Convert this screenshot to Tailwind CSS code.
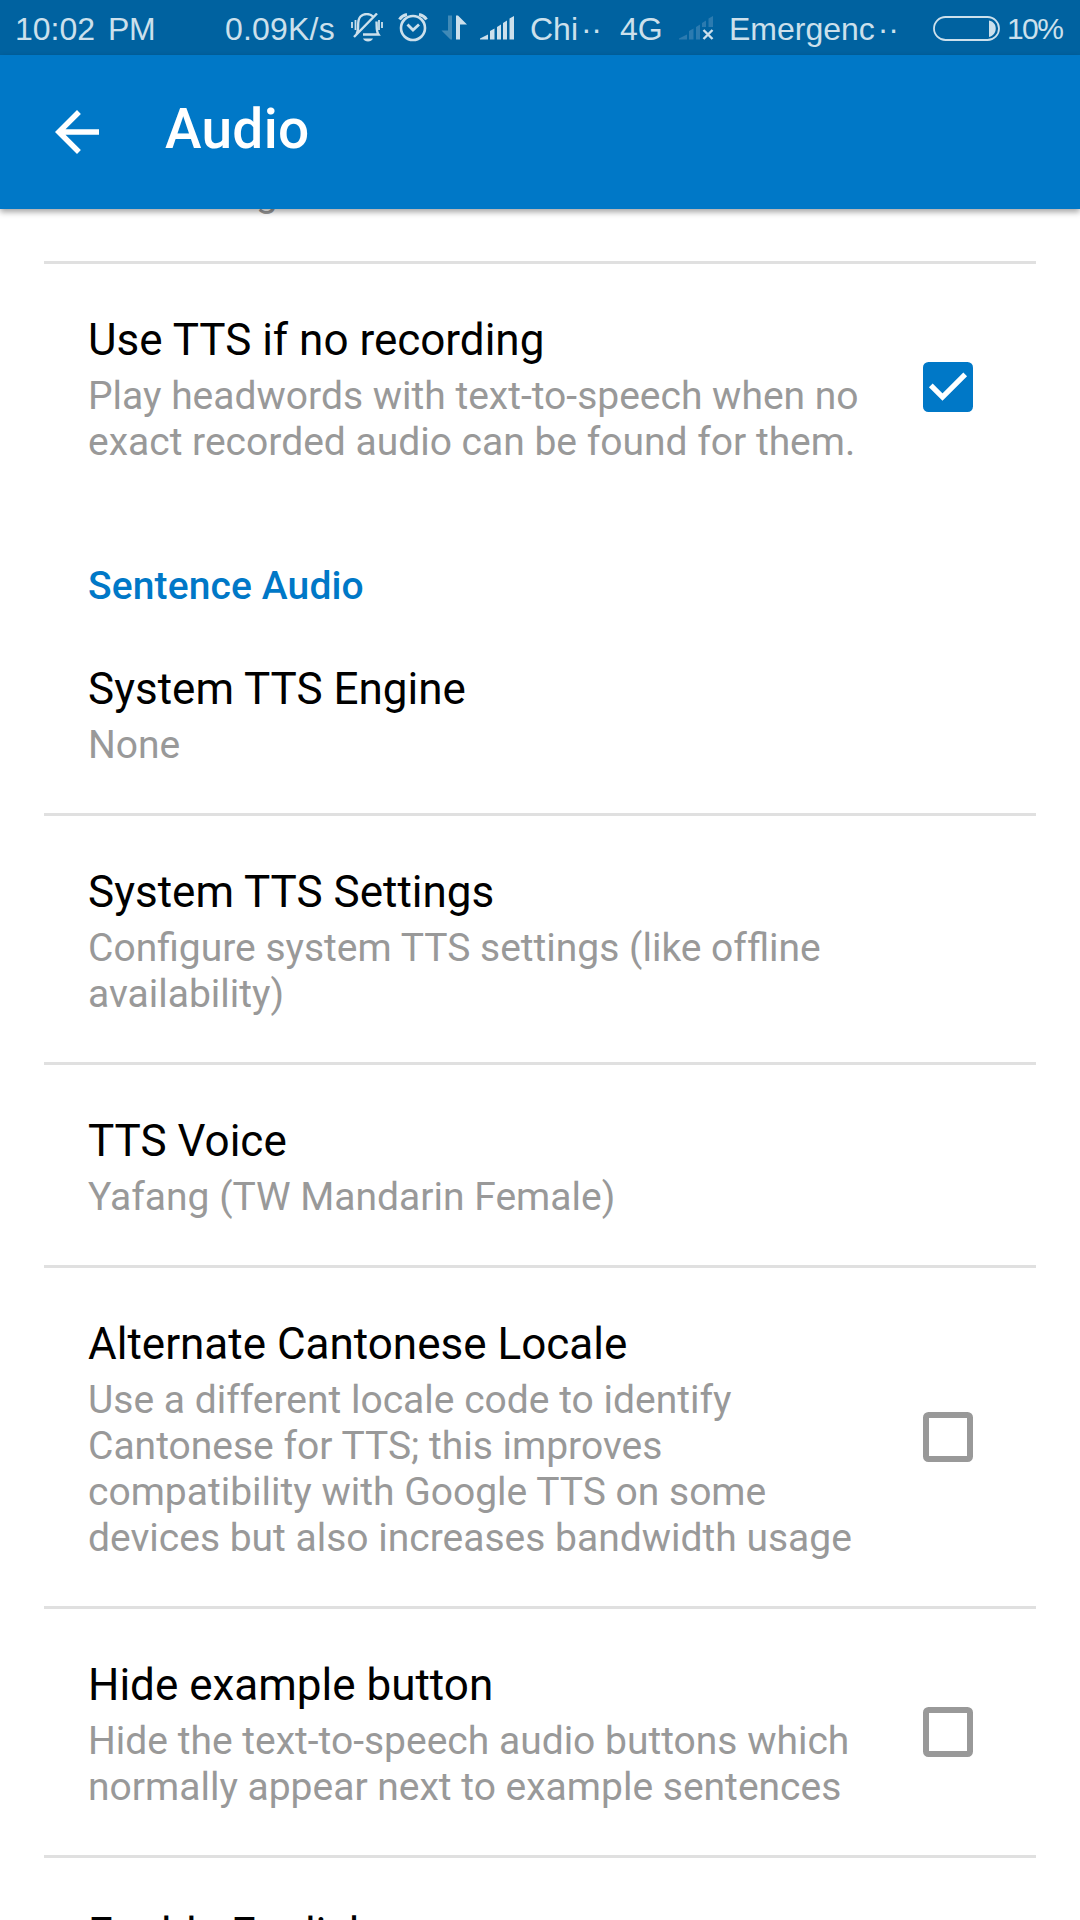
<!DOCTYPE html>
<html lang="en">
  <head>
    <meta charset="UTF-8" />
    <meta name="viewport" content="width=device-width, initial-scale=1.0" />
    <title>Audio</title>
    <script src="https://cdn.jsdelivr.net/npm/@tailwindcss/browser@4"></script>
  </head>
  <body class="bg-white">
    <div class="w-[1080px] h-[1920px] overflow-hidden flex flex-col bg-white font-[Roboto,sans-serif]">
      <!-- Status bar -->
      <div class="h-[55px] shrink-0 flex items-center bg-[#0062a0] text-[#cce0ec] font-['Liberation_Sans',sans-serif] text-[32px] leading-[54px] whitespace-nowrap pt-[3px]">
        <span class="ml-[15px] w-[210px]">10:02<span class="ml-[13px] tracking-[-0.5px]">PM</span></span>
        <span class="w-[125px] tracking-[0.2px]">0.09K/s</span>
        <svg class="w-[34px] h-[32px] shrink-0" viewBox="350 13 34 32" fill="none" stroke="#cce0ec" stroke-width="2.4">
          <path d="M373 16.500C370 13.500 364 13 360.500 16.500C356 21 360 29 356.500 34M376.500 21.500C377 27 376 31 378.500 34.500H363M354 37L377 13.500" />
          <path d="M352 22v6M355.500 20v10M379 20v10M382 22v6" stroke-width="1.800" />
          <path d="M363 38.500h10c-1.500 4-8.500 4-10 0z" fill="#cce0ec" stroke="none" />
        </svg>
        <svg class="ml-[14px] w-[30px] h-[32px] shrink-0" viewBox="398 13 30 32" fill="none" stroke="#cce0ec" stroke-width="2.6">
          <circle cx="413" cy="28" r="12" />
          <path d="M407.500 24.500L413 30L419 24.500" stroke-width="2.8" />
          <path d="M399.500 19.500Q402 15.500 407 14.500M426.500 19.500Q424 15.500 419 14.500" stroke-width="3" />
        </svg>
        <svg class="ml-[13px] w-[27px] h-[28px] shrink-0" viewBox="441 15 27 28">
          <path d="M448 15.500h4V39.500h-1.500L441.500 30.500h6.500z" fill="#408ab7" />
          <path d="M456 39.500V15.500h2L467 24.500h-7v15z" fill="#cce0ec" />
        </svg>
        <svg class="ml-[12px] w-[34px] h-[26px] shrink-0" viewBox="480 16 34 26" fill="#cce0ec">
          <path d="M480 39.500V38.500L488 34.500V39.500zM490 39.500V31l4.500-2.500v11zM497 39.500V27l4-2.500v15zM503 39.500V23l4-2.500v19zM509.500 39.500V18.500l4.500-2.500v23.500z" />
        </svg>
        <span class="ml-[16px] w-[90px]">Chi<span class="ml-[3px] tracking-[-0.3px]">··</span></span>
        <span class="w-[59px]">4G</span>
        <svg class="w-[35px] h-[26px] shrink-0" viewBox="679 16 35 26">
          <path d="M679 39.500V38.500L687 34.500V39.500zM689 39.500V31l4.500-2.500v11zM696 39.500V27l4-2.500v15zM702 27V23l4-2.500v6.500zM708.500 27V18.500l4.500-2.500v11z" fill="#2c7bb0" />
          <path d="M703.500 30l9 9M712.500 30l-9 9" stroke="#cce0ec" stroke-width="2.4" />
        </svg>
        <span class="ml-[15px] w-[204px]">Emergenc<span class="ml-[3px] tracking-[-0.3px]">··</span></span>
        <svg class="w-[67px] h-[26px] shrink-0" viewBox="933 15 67 26">
          <rect x="934" y="16" width="65" height="23" rx="11.500" fill="none" stroke="#cce0ec" stroke-width="1.8" />
          <path d="M989 19.500C998 21 998 34 989 36z" fill="#cce0ec" />
        </svg>
        <span class="ml-[7px] text-[30px] tracking-[-1.6px]">10%</span>
      </div>

      <!-- App bar -->
      <div class="relative z-10 h-[154px] shrink-0 flex items-center bg-[#0078c7] text-white shadow-[0_3px_6px_rgba(0,0,0,0.36)]">
        <svg class="ml-[55px] w-[44px] h-[44px]" viewBox="4 4 16 16" fill="#fff">
          <path d="M20 11H7.830l5.590-5.590L12 4l-8 8 8 8 1.410-1.410L7.830 13H20v-2z" />
        </svg>
        <h1 class="ml-[66px] mb-[6px] text-[55px] leading-[64px] font-medium tracking-[0.3px]">Audio</h1>
      </div>

      <!-- Row scrolled under the app bar -->
      <div class="mx-[44px] h-[55px] shrink-0 flex flex-col justify-end border-b-[3px] border-[#e0e0e0]">
        <p class="mb-[45px] pl-[212px] text-[39px] leading-[46px] text-[#999]">g</p>
      </div>

      <div class="mx-[44px] px-[44px] pt-[50px] pb-[45px] flex items-start shrink-0">
        <div class="w-[835px]">
          <h2 class="text-[44px] leading-[52px] text-black">Use TTS if no recording</h2>
          <p class="mt-[7px] text-[39px] leading-[46px] text-[#999]">Play headwords with text-to-speech when no<br />exact recorded audio can be found for them.</p>
        </div>
        <svg class="mt-[48px] w-[50px] h-[50px] shrink-0" viewBox="0 0 50 50">
          <rect width="50" height="50" rx="5.500" fill="#0078c7" />
          <path d="M7.800 23.300L19.500 35L42.200 12.300" fill="none" stroke="#fff" stroke-width="5.300" />
        </svg>
      </div>

      <h3 class="pl-[88px] pt-[53px] pb-[4px] shrink-0 text-[39px] leading-[46px] font-medium tracking-[0.12px] text-[#0078c7]">Sentence Audio</h3>

      <div class="mx-[44px] px-[44px] pt-[50px] pb-[45px] shrink-0 border-b-[3px] border-[#e0e0e0]">
        <h2 class="text-[44px] leading-[52px] text-black">System TTS Engine</h2>
        <p class="mt-[7px] text-[39px] leading-[46px] text-[#999]">None</p>
      </div>

      <div class="mx-[44px] px-[44px] pt-[50px] pb-[45px] shrink-0 border-b-[3px] border-[#e0e0e0]">
        <h2 class="text-[44px] leading-[52px] text-black">System TTS Settings</h2>
        <p class="mt-[7px] text-[39px] leading-[46px] text-[#999]">Configure system TTS settings (like of&zwnj;fline<br />availability)</p>
      </div>

      <div class="mx-[44px] px-[44px] pt-[50px] pb-[45px] shrink-0 border-b-[3px] border-[#e0e0e0]">
        <h2 class="text-[44px] leading-[52px] text-black">TTS Voice</h2>
        <p class="mt-[7px] text-[39px] leading-[46px] text-[#999]">Yafang (TW Mandarin Female)</p>
      </div>

      <div class="mx-[44px] px-[44px] pt-[50px] pb-[45px] flex items-start shrink-0 border-b-[3px] border-[#e0e0e0]">
        <div class="w-[835px]">
          <h2 class="text-[44px] leading-[52px] text-black">Alternate Cantonese Locale</h2>
          <p class="mt-[7px] text-[39px] leading-[46px] text-[#999]">Use a dif&zwnj;ferent locale code to identify<br />Cantonese for TTS; this improves<br />compatibility with Google TTS on some<br />devices but also increases bandwidth usage</p>
        </div>
        <div class="mt-[94px] w-[50px] h-[50px] shrink-0 rounded-[5.5px] border-[6px] border-[#999]"></div>
      </div>

      <div class="mx-[44px] px-[44px] pt-[50px] pb-[45px] flex items-start shrink-0 border-b-[3px] border-[#e0e0e0]">
        <div class="w-[835px]">
          <h2 class="text-[44px] leading-[52px] text-black">Hide example button</h2>
          <p class="mt-[7px] text-[39px] leading-[46px] text-[#999]">Hide the text-to-speech audio buttons which<br />normally appear next to example sentences</p>
        </div>
        <div class="mt-[48px] w-[50px] h-[50px] shrink-0 rounded-[5.5px] border-[6px] border-[#999]"></div>
      </div>

      <div class="mx-[44px] px-[44px] pt-[50px] shrink-0">
        <h2 class="text-[44px] leading-[52px] text-black">Enable English</h2>
      </div>
    </div>
  </body>
</html>
